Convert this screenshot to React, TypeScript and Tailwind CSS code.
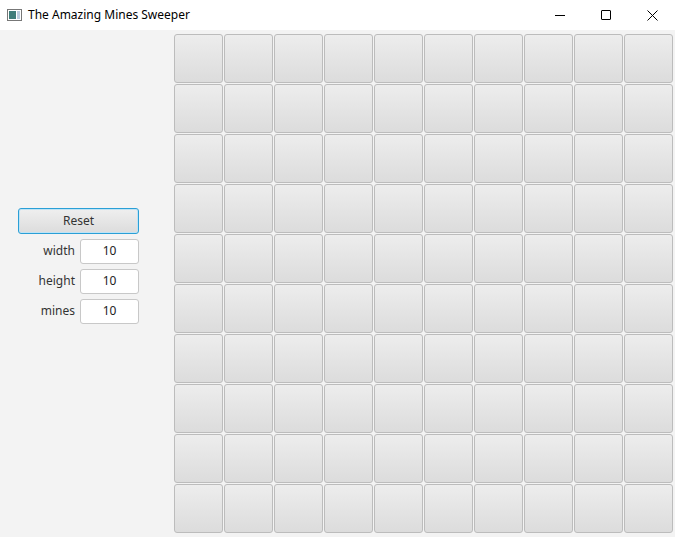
const cells = Array.from({ length: 100 }, (_, i) => i);

function Field({ label }: { label: string }) {
  return (
    <div className="flex h-[24px] items-center">
      <span className="w-[62px] pr-[5px] text-right text-[12px] text-[#333]">{label}</span>
      <div className="flex h-[25px] w-[59px] items-center justify-center rounded-[3px] border border-[#c8c8c8] bg-white text-[12px] text-[#222]">
        10
      </div>
    </div>
  );
}

export default function App() {
  return (
    <div className="h-[537px] w-[675px] overflow-hidden bg-[#f3f3f3] font-['Segoe_UI','Open_Sans','Liberation_Sans',sans-serif]">
      <div className="flex h-[30px] items-center bg-white">
        <svg className="ml-[7px] h-[12px] w-[15px]" viewBox="0 0 15 12">
          <rect x="0.5" y="0.5" width="14" height="11" fill="#fff" stroke="#777" />
          <rect x="2" y="2" width="7" height="8" fill="#3f7d7a" />
          <rect x="10" y="2" width="3" height="8" fill="#bcd" />
        </svg>
        <span className="ml-[6px] text-[12px] text-black">The Amazing Mines Sweeper</span>
        <div className="ml-auto flex h-full">
          <div className="flex w-[46px] items-center justify-center">
            <div className="h-px w-[10px] bg-black" />
          </div>
          <div className="flex w-[46px] items-center justify-center">
            <div className="h-[10px] w-[10px] rounded-[1px] border border-black" />
          </div>
          <div className="flex w-[46px] items-center justify-center">
            <svg className="h-[11px] w-[11px]" viewBox="0 0 11 11">
              <path d="M0.5 0.5L10.5 10.5M10.5 0.5L0.5 10.5" stroke="#000" strokeWidth="1" />
            </svg>
          </div>
        </div>
      </div>
      <div className="flex">
        <div className="w-[174px] pl-[18px] pt-[178px]">
          <div className="flex h-[26px] w-[121px] items-center justify-center rounded-[3px] border border-[#2a9fd6] bg-gradient-to-b from-[#efefef] to-[#dcdcdc] text-[12px] text-[#333] shadow-[inset_0_0_0_1px_#bfe3f5]">
            Reset
          </div>
          <div className="mt-[5px] flex flex-col gap-[6px]">
            <Field label="width" />
            <Field label="height" />
            <Field label="mines" />
          </div>
        </div>
        <div className="mt-[4px] grid grid-cols-[repeat(10,49px)] grid-rows-[repeat(10,49px)] gap-[1px]">
          {cells.map((i) => (
            <div
              key={i}
              className="rounded-[3px] border border-[#bcbcbc] bg-gradient-to-b from-[#ededed] to-[#dcdcdc]"
            />
          ))}
        </div>
      </div>
    </div>
  );
}
